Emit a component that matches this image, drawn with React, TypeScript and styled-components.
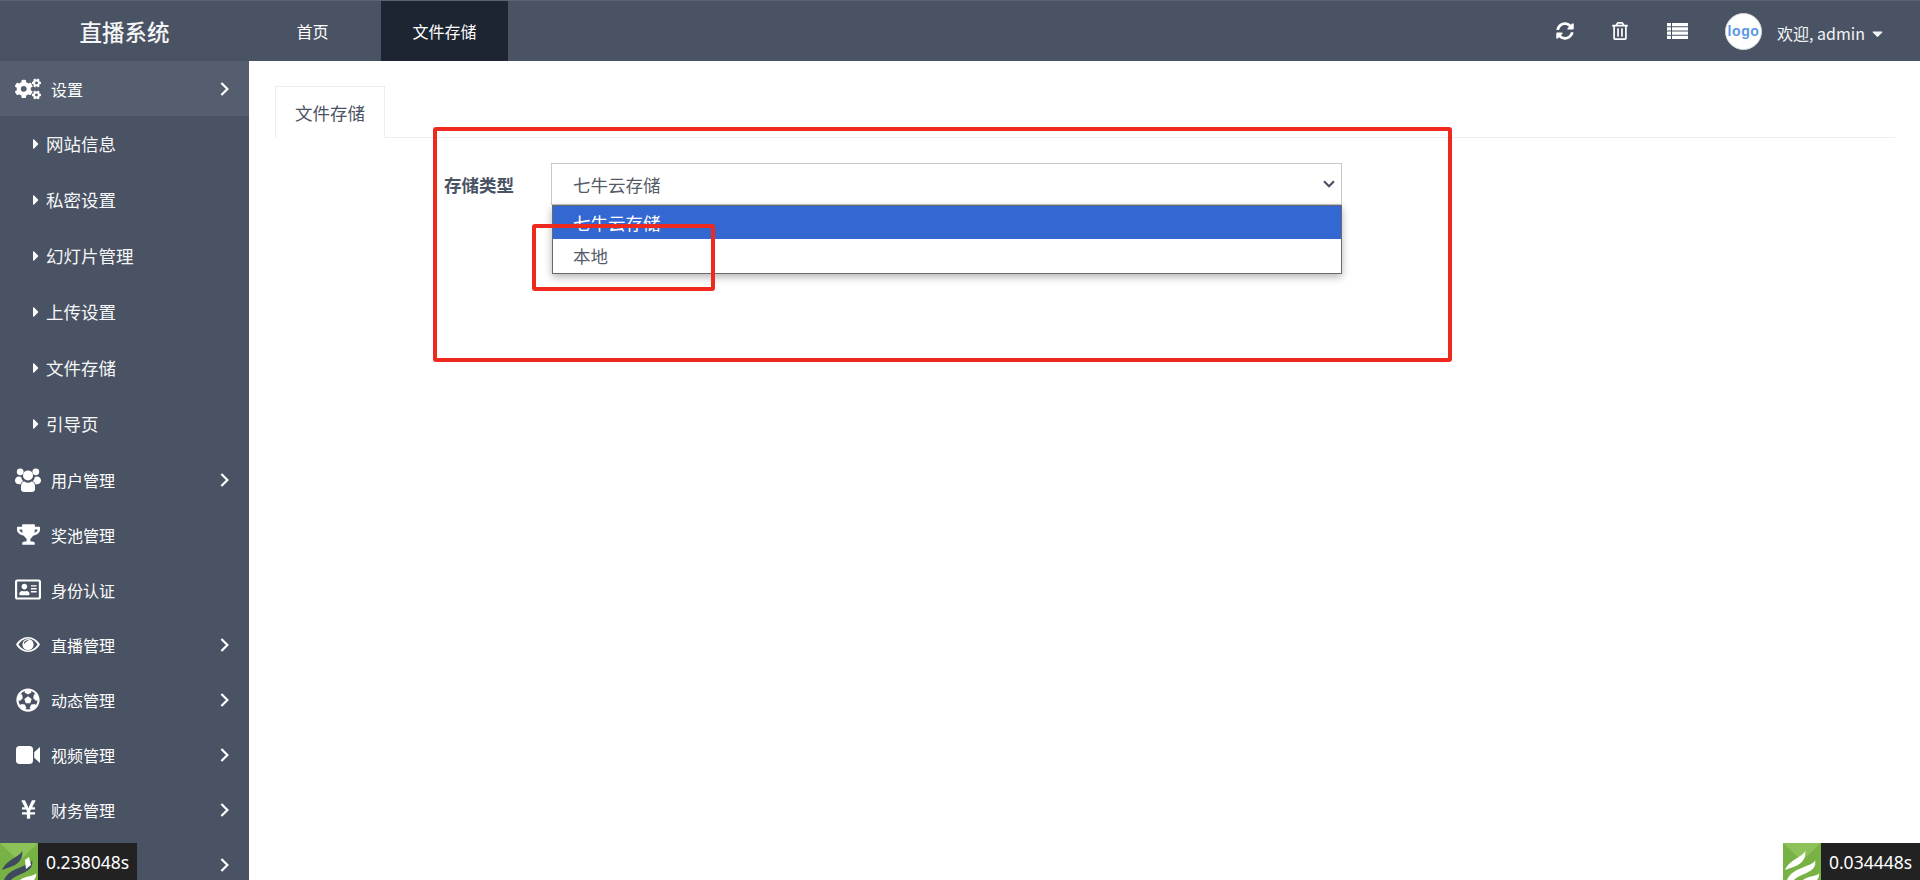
import React from "react";
import styled, { createGlobalStyle } from "styled-components";
import {
  FaCogs, FaTrophy, FaRegAddressCard, FaFutbol, FaYenSign,
  FaSyncAlt, FaRegTrashAlt, FaCaretDown, FaCaretRight,
} from "react-icons/fa";

const Global = createGlobalStyle`
  html, body { margin: 0; padding: 0; height: 100%; overflow: hidden; background: #fff; }
  body { font-family: "Noto Sans CJK SC", "Liberation Sans", sans-serif; }
  * { box-sizing: border-box; }
`;

const Page = styled.div`
  width: 1920px;
  height: 880px;
  display: flex;
  flex-direction: column;
  position: relative;
  overflow: hidden;
`;

const TopBar = styled.header`
  height: 61px;
  flex: none;
  display: flex;
  align-items: stretch;
  background: #4a5364;
  border-top: 1px solid #5a6272;
  color: #fff;
`;

const Brand = styled.div`
  width: 249px;
  display: flex;
  align-items: center;
  justify-content: center;
  font-size: 22.5px;
  font-weight: 500;
  color: #f4f5f6;
`;

const TopNav = styled.nav`
  display: flex;
  margin-left: 9px;
`;

const TopLink = styled.a<{ $active?: boolean }>`
  display: flex;
  align-items: center;
  justify-content: center;
  font-size: 16px;
  width: ${(p) => (p.$active ? "127px" : "123px")};
  padding-right: ${(p) => (p.$active ? "0" : "14px")};
  background: ${(p) => (p.$active ? "#1c2531" : "transparent")};
  color: #fff;
`;

const TopRight = styled.div`
  margin-left: auto;
  display: flex;
  align-items: center;
  padding-right: 34px;
`;

const TopIcon = styled.span<{ $gap: number }>`
  display: flex;
  margin-right: ${(p) => p.$gap}px;
  color: #fff;
`;

const Avatar = styled.div`
  width: 37px;
  height: 37px;
  border-radius: 50%;
  background: #fff;
  border: 1px solid #d5d8dc;
  color: #5b96e8;
  font-size: 14px;
  font-weight: 700;
  font-family: "Liberation Sans", sans-serif;
  letter-spacing: 0.6px;
  display: flex;
  align-items: center;
  justify-content: center;
  margin-right: 15px;
`;

const Welcome = styled.div`
  display: flex;
  align-items: center;
  font-size: 16px;
  color: #f2f3f5;
  gap: 4px;
  position: relative;
  top: 2px;
`;

const Body = styled.div`
  flex: 1;
  display: flex;
  min-height: 0;
`;

const Side = styled.aside`
  width: 249px;
  flex: none;
  background: #4a5364;
  color: #fff;
  overflow: hidden;
`;

const MainItem = styled.div<{ $open?: boolean }>`
  height: 55px;
  display: flex;
  align-items: center;
  padding: 0 20px 0 15px;
  background: ${(p) => (p.$open ? "#555e6e" : "transparent")};
  font-size: 16px;
`;

const MainIcon = styled.span`
  width: 26px;
  display: flex;
  justify-content: center;
  margin-right: 10px;
`;

const MainLabel = styled.span`
  flex: 1;
`;

const SubItem = styled.div`
  height: 56px;
  display: flex;
  align-items: center;
  padding-left: 28px;
  font-size: 17.5px;
  color: #f6f7f8;
  border-bottom: 1px solid #4d5667;
`;

const Caret = styled.span`
  display: flex;
  width: 18px;
  color: #fff;
`;

const Content = styled.main`
  flex: 1;
  padding: 25px 25px 0 26px;
`;

const Tabs = styled.div`
  height: 52px;
  display: flex;
  border-bottom: 1px solid #eeeeee;
`;

const Tab = styled.div`
  width: 110px;
  height: 52px;
  background: #fff;
  border: 1px solid #eeeeee;
  border-bottom: none;
  display: flex;
  align-items: center;
  justify-content: center;
  font-size: 17.5px;
  color: #4a5364;
`;

const FormRow = styled.div`
  display: flex;
  align-items: center;
  margin: 25px 0 0 169px;
`;

const Label = styled.label`
  width: 107px;
  font-size: 17.5px;
  font-weight: 700;
  color: #4a5364;
`;

const SelectWrap = styled.div`
  position: relative;
  width: 791px;
`;

const SelectBox = styled.div`
  height: 42px;
  border: 1px solid #c8c8c8;
  background: #fff;
  display: flex;
  align-items: center;
  justify-content: space-between;
  padding: 0 6px 0 21px;
  font-size: 17.5px;
  color: #555c69;
`;

const Dropdown = styled.div`
  position: absolute;
  top: 42px;
  left: 1px;
  right: 0;
  height: 69px;
  background: #fff;
  border: 1px solid #666a70;
  box-shadow: 0 3px 8px rgba(0, 0, 0, 0.3);
  font-size: 17.5px;
`;

const Option = styled.div<{ $selected?: boolean }>`
  height: 33px;
  display: flex;
  align-items: center;
  padding-left: 20px;
  background: ${(p) => (p.$selected ? "#3367d1" : "#fff")};
  color: ${(p) => (p.$selected ? "#fff" : "#555c69")};
`;

const Mark = styled.div<{ $x: number; $y: number; $w: number; $h: number }>`
  position: absolute;
  left: ${(p) => p.$x}px;
  top: ${(p) => p.$y}px;
  width: ${(p) => p.$w}px;
  height: ${(p) => p.$h}px;
  border: 4px solid #ee2a1e;
  border-radius: 3px;
  pointer-events: none;
`;

const Badge = styled.div<{ $right?: boolean }>`
  position: absolute;
  bottom: 0;
  ${(p) => (p.$right ? "right: 0;" : "left: 0;")}
  height: 37px;
  display: flex;
`;

const BadgeLogo = styled.div`
  width: 38px;
  height: 37px;
  background: #78b144;
`;

const BadgeTime = styled.div`
  width: 99px;
  background: #222222;
  color: #fff;
  display: flex;
  align-items: center;
  justify-content: center;
  font-size: 17.5px;
  font-family: "Noto Sans", "Open Sans", sans-serif;
`;

const ChevronIcon = () => (
  <svg width="9" height="14" viewBox="0 0 9 14">
    <path d="M1.4 1L7.4 7L1.4 13" fill="none" stroke="#fff" strokeWidth="2.2" />
  </svg>
);

const ListIcon = () => (
  <svg width="21" height="16" viewBox="0 0 21 16" fill="#fff">
    <path d="M0 0H4V3.2H0ZM5 0H21V3.2H5ZM0 4.3H4V7.5H0ZM5 4.3H21V7.5H5ZM0 8.6H4V11.8H0ZM5 8.6H21V11.8H5ZM0 12.8H4V16H0ZM5 12.8H21V16H5Z" />
  </svg>
);

const UsersIcon = () => (
  <svg width="26" height="24" viewBox="0 0 26 24" fill="#fff">
    <circle cx="5.2" cy="3.8" r="3.4" />
    <circle cx="20.8" cy="3.8" r="3.4" />
    <circle cx="13" cy="7.4" r="5" />
    <path d="M0 12.5C0 9.5 2 8.4 4 8.4C5 8.4 5.8 8.8 6.3 9.3C6.5 11 7.2 12.2 8.2 13.2C6.8 13.8 5.8 15 5.4 16.4C2.5 16.4 0 15.5 0 12.5Z" />
    <path d="M26 12.5C26 9.5 24 8.4 22 8.4C21 8.4 20.2 8.8 19.7 9.3C19.5 11 18.8 12.2 17.8 13.2C19.2 13.8 20.2 15 20.6 16.4C23.5 16.4 26 15.5 26 12.5Z" />
    <path d="M6 18.5C6 15.5 7.5 13.6 9.5 13.6C10.6 14.4 11.7 14.8 13 14.8C14.3 14.8 15.4 14.4 16.5 13.6C18.5 13.6 20 15.5 20 18.5V21C20 22.8 18.8 24 17 24H9C7.2 24 6 22.8 6 21Z" />
  </svg>
);

const EyeIcon = () => (
  <svg width="24" height="15" viewBox="0 0 24 15">
    <path d="M0 7.5C3 2.8 7.2 0 12 0C16.8 0 21 2.8 24 7.5C21 12.2 16.8 15 12 15C7.2 15 3 12.2 0 7.5Z" fill="#fff" />
    <path d="M2.4 7.5C4.8 4 8 1.6 12 1.6C16 1.6 19.2 4 21.6 7.5C19.2 11 16 13.4 12 13.4C8 13.4 4.8 11 2.4 7.5Z" fill="#4a5364" />
    <circle cx="12" cy="7.5" r="5.6" fill="#fff" />
    <path d="M12 3.2A4.3 4.3 0 0 0 7.8 7.5C9.5 5 11 4 13.4 3.4Z" fill="#4a5364" />
  </svg>
);

const VideoIcon = () => (
  <svg width="24" height="18" viewBox="0 0 24 18" fill="#fff">
    <rect x="0" y="0" width="17" height="18" rx="3.5" />
    <path d="M18.2 6.2L24 1V17L18.2 11.8Z" />
  </svg>
);

const Flame = ({ dark }: { dark?: boolean }) => {
  const swoop = dark ? "#3f4a5e" : "#fff";
  return (
    <svg width="38" height="37" viewBox="0 0 38 37">
      <path d="M0 0H38V37H0Z" fill="#78b144" />
      <path d="M0 0L19 18L38 0Z" fill="#8cc257" />
      <path d="M22 6C24 13 7 15 2 27C9 24 25 22 22 6Z" fill={swoop} />
      <path d="M32 17C32 23 9 24 4 37H11C17 30 35 30 32 17Z" fill={swoop} />
      <path d="M36 30C36 33 24 33 20 37H34C36 35 36.5 32 36 30Z" fill="#fff" />
      {dark && <path d="M25 17L29 14L31 22L26 26Z" fill="#fff" />}
    </svg>
  );
};

const sub = ["网站信息", "私密设置", "幻灯片管理", "上传设置", "文件存储", "引导页"];
const main: [React.ReactNode, string, boolean][] = [
  [<UsersIcon />, "用户管理", true],
  [<FaTrophy size={23} />, "奖池管理", false],
  [<FaRegAddressCard size={27} />, "身份认证", false],
  [<EyeIcon />, "直播管理", true],
  [<FaFutbol size={24} />, "动态管理", true],
  [<VideoIcon />, "视频管理", true],
  [<FaYenSign size={21} />, "财务管理", true],
];

export default function App() {
  return (
    <Page>
      <Global />
      <TopBar>
        <Brand>直播系统</Brand>
        <TopNav>
          <TopLink>首页</TopLink>
          <TopLink $active>文件存储</TopLink>
        </TopNav>
        <TopRight>
          <TopIcon $gap={37}><FaSyncAlt size={18} /></TopIcon>
          <TopIcon $gap={38}><FaRegTrashAlt size={18} /></TopIcon>
          <TopIcon $gap={37}><ListIcon /></TopIcon>
          <Avatar>logo</Avatar>
          <Welcome>欢迎, admin <FaCaretDown size={17} /></Welcome>
        </TopRight>
      </TopBar>
      <Body>
        <Side>
          <MainItem $open>
            <MainIcon><FaCogs size={26} /></MainIcon>
            <MainLabel>设置</MainLabel>
            <ChevronIcon />
          </MainItem>
          {sub.map((s) => (
            <SubItem key={s}>
              <Caret><FaCaretRight size={16} /></Caret>
              {s}
            </SubItem>
          ))}
          {main.map(([icon, label, arrow]) => (
            <MainItem key={label}>
              <MainIcon>{icon}</MainIcon>
              <MainLabel>{label}</MainLabel>
              {arrow && <ChevronIcon />}
            </MainItem>
          ))}
          <MainItem>
            <MainIcon />
            <MainLabel />
            <ChevronIcon />
          </MainItem>
        </Side>
        <Content>
          <Tabs><Tab>文件存储</Tab></Tabs>
          <FormRow>
            <Label>存储类型</Label>
            <SelectWrap>
              <SelectBox>
                七牛云存储
                <svg width="12" height="8" viewBox="0 0 12 8">
                  <path d="M1 1.2L6 6.2L11 1.2" fill="none" stroke="#4a5364" strokeWidth="2.2" />
                </svg>
              </SelectBox>
              <Dropdown>
                <Option $selected>七牛云存储</Option>
                <Option>本地</Option>
              </Dropdown>
            </SelectWrap>
          </FormRow>
        </Content>
      </Body>
      <Mark $x={433} $y={127} $w={1019} $h={235} />
      <Mark $x={532} $y={224} $w={183} $h={67} />
      <Badge><BadgeLogo><Flame dark /></BadgeLogo><BadgeTime>0.238048s</BadgeTime></Badge>
      <Badge $right><BadgeLogo><Flame /></BadgeLogo><BadgeTime>0.034448s</BadgeTime></Badge>
    </Page>
  );
}
